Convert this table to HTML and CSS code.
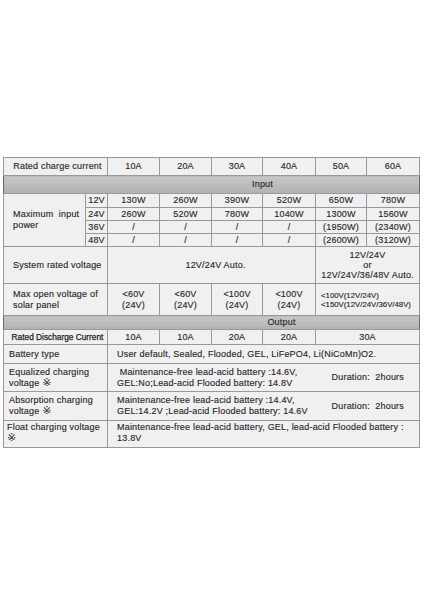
FILE: index.html
```html
<!DOCTYPE html>
<html>
<head>
<meta charset="utf-8">
<link rel="stylesheet" href="styles.css">
</head>
<body>
<div class="page">
<table class="spec">
<colgroup>
<col class="c-label"><col class="c-volt"><col class="c52"><col class="c52"><col class="c51"><col class="c53"><col class="c51"><col class="c53">
</colgroup>
<tr class="r-head">
<td colspan="2" class="head-label">Rated charge current</td>
<td>10A</td><td>20A</td><td>30A</td><td>40A</td><td>50A</td><td>60A</td>
</tr>
<tr class="r-band">
<td colspan="8" class="band band-input">Input</td>
</tr>
<tr class="r-pw1">
<td rowspan="4" class="label">Maximum&nbsp; input<br>power</td>
<td>12V</td><td>130W</td><td>260W</td><td>390W</td><td>520W</td><td>650W</td><td>780W</td>
</tr>
<tr class="r-pw">
<td>24V</td><td>260W</td><td>520W</td><td>780W</td><td>1040W</td><td>1300W</td><td>1560W</td>
</tr>
<tr class="r-pw">
<td>36V</td><td>/</td><td>/</td><td>/</td><td>/</td><td>(1950W)</td><td>(2340W)</td>
</tr>
<tr class="r-pw">
<td>48V</td><td>/</td><td>/</td><td>/</td><td>/</td><td>(2600W)</td><td>(3120W)</td>
</tr>
<tr class="r-sys">
<td colspan="2" class="label">System rated voltage</td>
<td colspan="4" class="sys-val">12V/24V Auto.</td>
<td colspan="2" class="multi tight">12V/24V<br>or<br>12V/24V/36/48V Auto.</td>
</tr>
<tr class="r-open">
<td colspan="2" class="label multi">Max open voltage of<br>solar panel</td>
<td class="multi">&lt;60V<br>(24V)</td>
<td class="multi">&lt;60V<br>(24V)</td>
<td class="multi">&lt;100V<br>(24V)</td>
<td class="multi">&lt;100V<br>(24V)</td>
<td colspan="2" class="open-last">&lt;100V(12V/24V)<br>&lt;150V(12V/24V/36V/48V)</td>
</tr>
<tr class="r-band2">
<td colspan="8" class="band band-output">Output</td>
</tr>
<tr class="r-dis">
<td colspan="2" class="dis-label">Rated Discharge Current</td>
<td>10A</td><td>10A</td><td>20A</td><td>20A</td><td colspan="2">30A</td>
</tr>
<tr class="r-bat">
<td colspan="2" class="label low">Battery type</td>
<td colspan="6" class="val">User default, Sealed, Flooded, GEL, LiFePO4, Li(NiCoMn)O2.</td>
</tr>
<tr class="r-eq">
<td colspan="2" class="label low multi">Equalized charging<br>voltage <span class="ref">※</span></td>
<td colspan="6" class="val">
<div class="split">
<div class="multi">&nbsp;Maintenance-free lead-acid battery :14.6V,<br>GEL:No;Lead-acid Flooded battery: 14.8V</div>
<div class="dur">Duration:&nbsp; 2hours</div>
</div>
</td>
</tr>
<tr class="r-abs">
<td colspan="2" class="label low multi">Absorption charging<br>voltage <span class="ref">※</span></td>
<td colspan="6" class="val">
<div class="split">
<div class="multi">Maintenance-free lead-acid battery :14.4V,<br>GEL:14.2V ;Lead-acid Flooded battery: 14.6V</div>
<div class="dur">Duration:&nbsp; 2hours</div>
</div>
</td>
</tr>
<tr class="r-float">
<td colspan="2" class="label lower multi top">Float charging voltage<br><span class="ref">※</span></td>
<td colspan="6" class="val multi top">Maintenance-free lead-acid battery, GEL, lead-acid Flooded battery :<br>13.8V</td>
</tr>
</table>
</div>
</body>
</html>
```
FILE: styles.css
```css
html, body {
  margin: 0;
  padding: 0;
  background: #ffffff;
}
.page {
  width: 424px;
  height: 600px;
  padding: 157px 0 0 3px;
  box-sizing: border-box;
  background: #ffffff;
}
.spec {
  width: 416px;
  table-layout: fixed;
  border-collapse: collapse;
  border: 1px solid #6a6a6a;
  font-family: "Liberation Sans", Arial, "DejaVu Sans", sans-serif;
  font-size: 9px;
  letter-spacing: 0.2px;
  color: #2b2b2b;
  -webkit-text-stroke: 0.15px #2b2b2b;
  background: #f0f0f0;
}
.c-label { width: 82px; }
.c-volt { width: 22px; }
.c52 { width: 52px; }
.c51 { width: 51px; }
.c53 { width: 53px; }
.spec td {
  border: 1px solid #999999;
  padding: 0;
  text-align: center;
  vertical-align: middle;
  line-height: 11px;
  white-space: nowrap;
  overflow: hidden;
}
.r-head td { height: 17px; }
.r-band td { height: 17px; }
.r-pw1 td { height: 13px; }
.r-pw td { height: 12px; }
.r-sys td { height: 36px; }
.r-open td { height: 31px; }
.r-band2 td { height: 13px; }
.r-dis td { height: 14px; }
.r-bat td { height: 18px; }
.r-eq td { height: 27px; }
.r-abs td { height: 28px; }
.r-float td { height: 25px; }
.spec td.head-label {
  text-align: center;
  padding-left: 4px;
}
.spec td.band {
  background: linear-gradient(#c6c6c6, #b2b2b2);
  border-left-color: #6a6a6a;
  border-right-color: #6a6a6a;
}
.spec td.band-input { padding-left: 102px; }
.spec td.band-output { padding-left: 140px; }
.spec td.label {
  text-align: left;
  padding-left: 9px;
}
.spec td.label.low { padding-left: 5px; }
.spec td.label.lower { padding-left: 3px; }
.spec td.top { vertical-align: top; padding-top: 1px; }
.multi { line-height: 11px; }
.spec td.tight { line-height: 10px; }
.spec td.sys-val { padding-left: 8px; }
.spec td.open-last {
  text-align: left;
  padding-left: 5px;
  font-size: 7.8px;
  letter-spacing: 0;
  line-height: 9px;
}
.spec td.dis-label {
  font-size: 8.3px;
  letter-spacing: 0;
  color: #222222;
  -webkit-text-stroke: 0.25px #222222;
  padding-left: 4px;
}
.spec td.val {
  text-align: left;
  padding-left: 9px;
}
.split {
  display: flex;
  align-items: center;
  justify-content: space-between;
  padding-right: 15px;
}
.dur {
  line-height: 11px;
}
.ref {
  font-family: "DejaVu Sans", sans-serif;
  font-size: 11px;
  line-height: 10px;
  letter-spacing: 0;
  -webkit-text-stroke: 0;
}
```
